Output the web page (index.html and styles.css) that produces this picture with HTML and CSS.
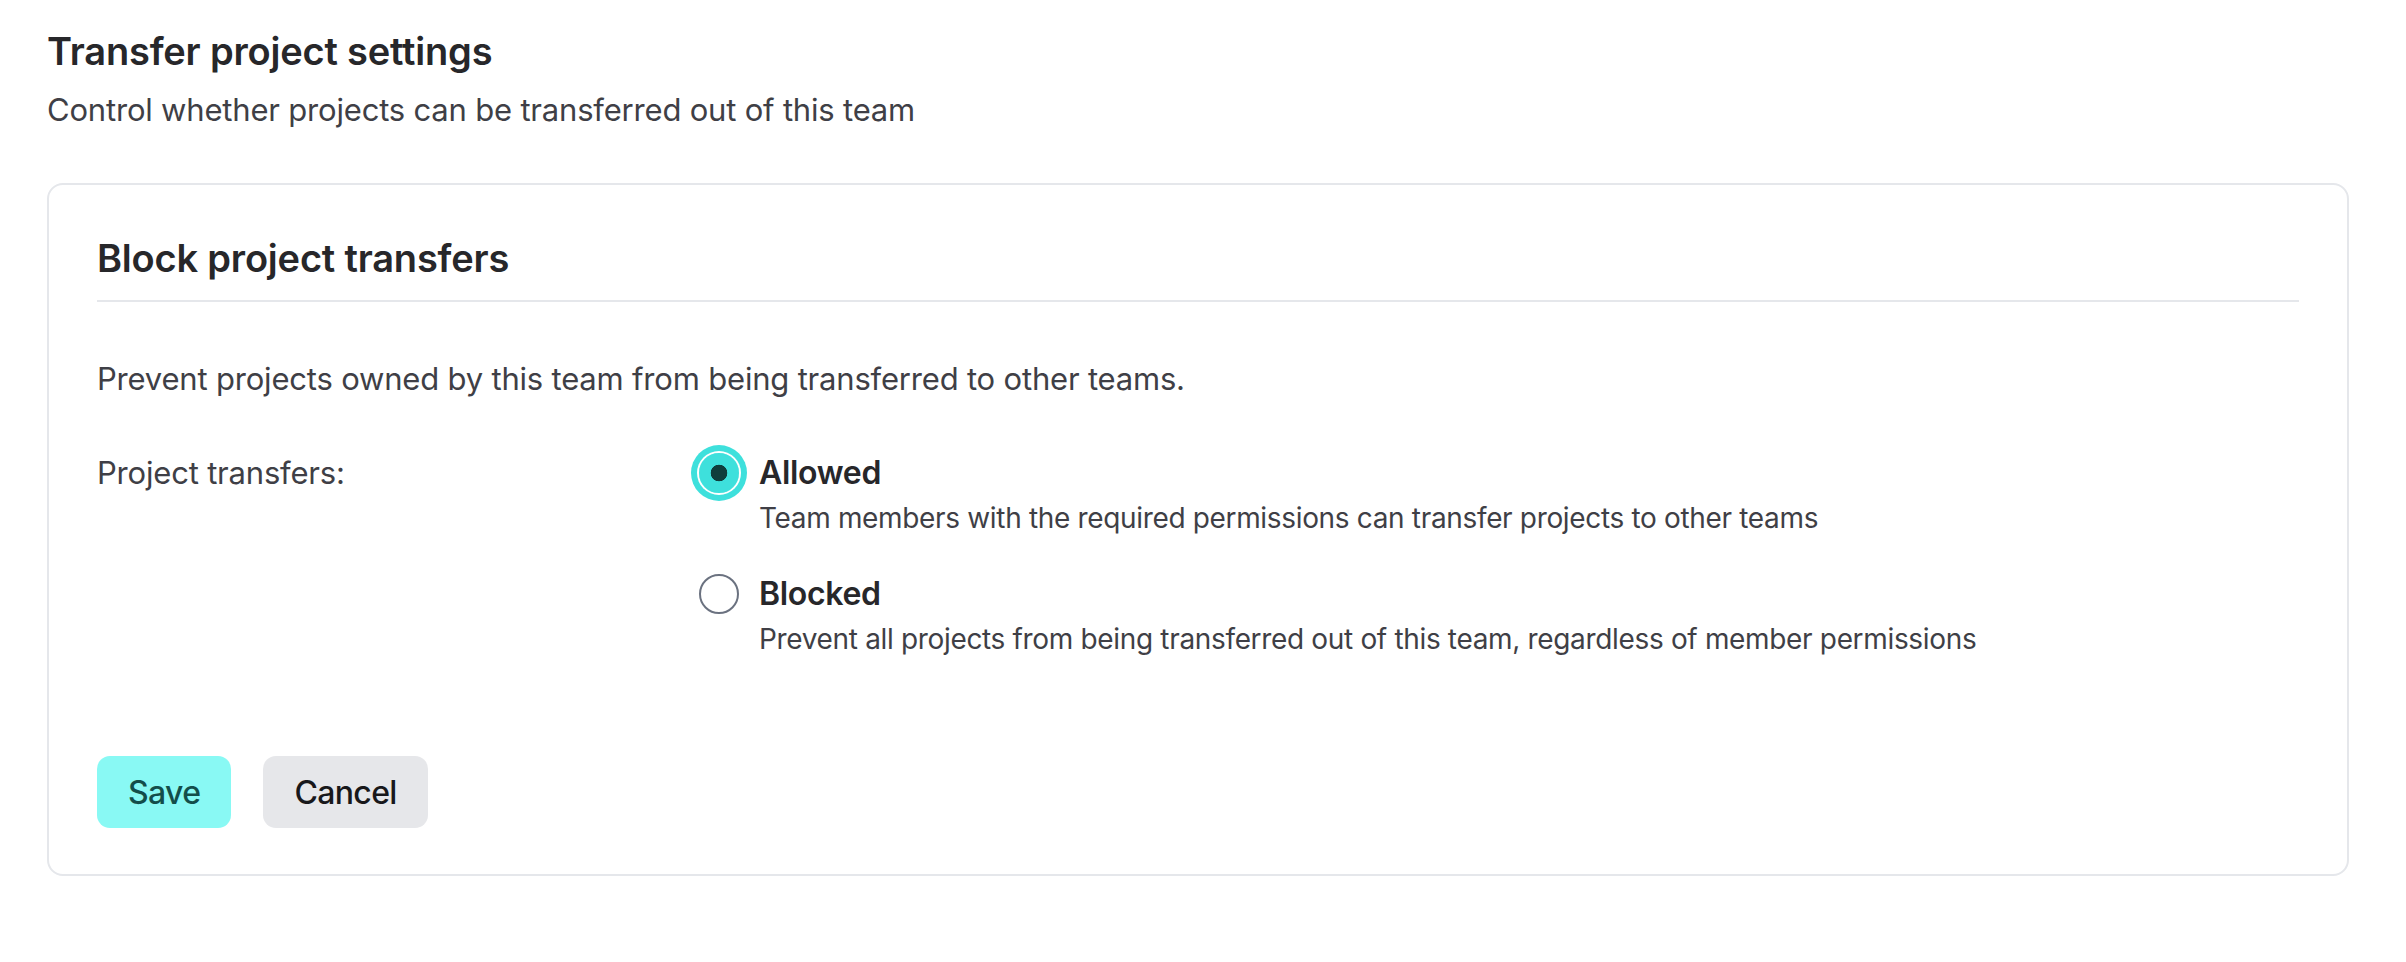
FILE: index.html
```html
<!DOCTYPE html>
<html lang="en">

<head>
  <meta charset="UTF-8">
  <meta name="viewport" content="width=device-width, initial-scale=1.0">
  <title>Transfer project settings</title>
  <link rel="stylesheet" href="styles.css">
</head>

<body>
  <main class="page">
    <header class="page-head">
      <h1>Transfer project settings</h1>
      <p class="page-sub">Control whether projects can be transferred out of this team</p>
    </header>

    <form class="section-box" id="transferForm">
      <h2>Block project transfers</h2>
      <p class="section-desc">Prevent projects owned by this team from being transferred to other teams.</p>

      <div class="field-row">
        <span class="field-label">Project transfers:</span>
        <div class="radio-list">
          <label class="radio-item">
            <input type="radio" name="transfers" value="allowed" checked>
            <span class="radio-text">
              <span class="radio-title">Allowed</span>
              <span class="radio-hint">Team members with the required permissions can transfer projects to other teams</span>
            </span>
          </label>
          <label class="radio-item">
            <input type="radio" name="transfers" value="blocked">
            <span class="radio-text">
              <span class="radio-title">Blocked</span>
              <span class="radio-hint">Prevent all projects from being transferred out of this team, regardless of member permissions</span>
            </span>
          </label>
        </div>
      </div>

      <div class="actions">
        <button type="submit" class="btn btn-primary">Save</button>
        <button type="button" class="btn btn-secondary">Cancel</button>
      </div>
    </form>
  </main>
</body>
</html>
```

FILE: styles.css
```css
:root {
  --heading-color: #27272a;
  --text-color: #3f3f46;
  --border-color: #e5e7eb;
  --accent: #3ee0dc;
  --accent-soft: #89f9f4;
  --radius: 16px;
}
html {
  font-family: Inter, "Noto Sans", sans-serif;
  letter-spacing: -0.012em;
}
body {
  margin: 0;
  background: #fff;
  color: var(--text-color);
}
.page {
  padding: 26px 57px 40px 47px;
}
h1 {
  margin: 0;
  font-size: 38px; line-height: 50px; font-weight: 600;
  letter-spacing: -0.005em;
  color: var(--heading-color);
}
.page-sub {
  margin: 10px 0 0;
  font-size: 31px; line-height: 48px;
}
.section-box {
  margin-top: 49px;
  border: 2px solid var(--border-color);
  border-radius: var(--radius);
  padding: 48px 48px 46px;
}
h2 {
  margin: 0;
  padding-bottom: 17px;
  border-bottom: 2px solid var(--border-color);
  font-size: 38px; line-height: 50px; font-weight: 600;
  letter-spacing: -0.005em;
  color: var(--heading-color);
}
.section-desc {
  margin: 53px 0 0;
  font-size: 31px; line-height: 48px;
}
.field-row {
  display: grid;
  grid-template-columns: 602px 1fr;
  margin-top: 46px;
}
.field-label {
  font-size: 31px; line-height: 48px;
}
.radio-list {
  display: flex; flex-direction: column; gap: 31px;
}
.radio-item {
  display: flex; align-items: flex-start; gap: 20px;
  cursor: pointer;
}
.radio-item input {
  appearance: none;
  margin: 4px 0 0;
  width: 40px; height: 40px;
  flex: none;
  border: 2px solid #6b7280;
  border-radius: 50%;
  background: #fff;
}
.radio-item input:checked {
  border-color: var(--accent);
  background: radial-gradient(circle, #0f3d3c 0 8px, var(--accent) 8.6px);
  box-shadow: 0 0 0 2px #fff, 0 0 0 8px var(--accent);
}
.radio-text {
  display: flex; flex-direction: column;
}
.radio-title {
  font-size: 32px; line-height: 48px; font-weight: 600;
  letter-spacing: -0.01em;
  color: var(--heading-color);
}
.radio-hint {
  font-size: 28px; line-height: 42px;
  letter-spacing: -0.012em;
}
.actions {
  display: flex; gap: 32px;
  margin-top: 96px;
}
.btn {
  height: 72px; padding: 0 31px;
  border: none; border-radius: 13px;
  font-family: inherit; font-size: 32px; font-weight: 500;
  letter-spacing: -0.02em;
  cursor: pointer;
}
.btn-primary { background: var(--accent-soft); color: #134e4a; }
.btn-secondary { background: #e6e7ea; color: #18181b; }
```
